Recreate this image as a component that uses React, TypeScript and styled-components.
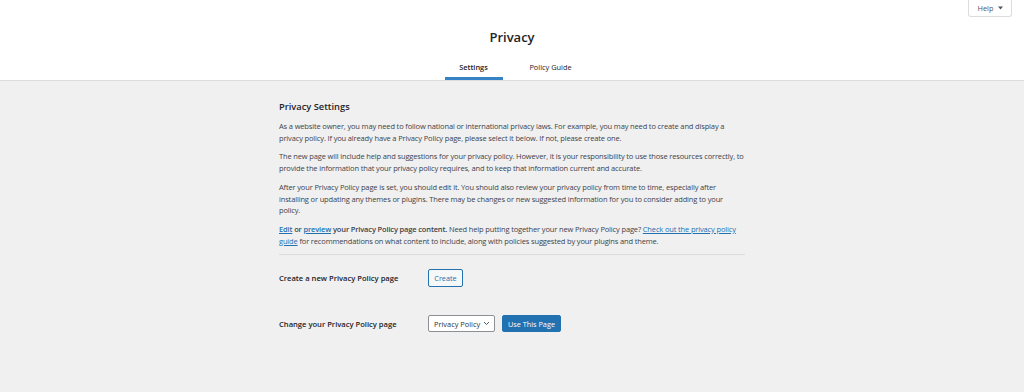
import React from 'react';
import styled, { createGlobalStyle } from 'styled-components';

const GlobalStyle = createGlobalStyle`
  html, body {
    margin: 0;
    padding: 0;
    background: #f0f0f1;
  }

  body {
    font-family: 'Open Sans', 'Liberation Sans', sans-serif;
    color: #3c434a;
  }

  * {
    box-sizing: border-box;
  }
`;

const Page = styled.div`
  min-height: 392px;
  background: #f0f0f1;
`;

const Header = styled.header`
  position: relative;
  height: 81px;
  background: #fff;
  border-bottom: 1px solid #dcdcde;
  display: flex;
  flex-direction: column;
  align-items: center;
`;

const HelpTab = styled.button`
  position: absolute;
  top: -1px;
  right: 12px;
  width: 44px;
  height: 18px;
  display: flex;
  align-items: center;
  justify-content: center;
  gap: 4px;
  padding: 0;
  background: #fff;
  border: 1px solid #dcdcde;
  border-top: none;
  border-radius: 0 0 3px 3px;
  color: #50575e;
  font-family: inherit;
  font-size: 7.4px;
  cursor: pointer;
`;

const Title = styled.h1`
  margin: 28px 0 0;
  font-size: 13px;
  line-height: 18px;
  font-weight: 600;
  color: #1d2327;
`;

const Tabs = styled.nav`
  display: inline-grid;
  grid-template-columns: 58px 58px;
  column-gap: 19px;
  margin-top: 10px;
`;

const Tab = styled.a<{ $active?: boolean }>`
  display: block;
  padding: 5px 0 4px;
  text-align: center;
  font-size: 7.4px;
  line-height: 12px;
  color: #1d2327;
  font-weight: ${({ $active }) => ($active ? 600 : 400)};
  text-decoration: none;
  border-bottom: 3px solid ${({ $active }) => ($active ? '#3582c4' : 'transparent')};
`;

const Body = styled.main`
  width: 466px;
  margin: 0 auto;
  padding-top: 19px;
`;

const Heading = styled.h2`
  margin: 0 0 8px;
  font-size: 9.3px;
  line-height: 13px;
  font-weight: 600;
  color: #1d2327;
`;

const Para = styled.p`
  margin: 0 0 7px;
  font-size: 7.5px;
  line-height: 11.7px;
  letter-spacing: -0.15px;
`;

const Strong = styled.strong`
  font-weight: 600;
  color: #3c434a;
`;

const Link = styled.a<{ $bold?: boolean }>`
  color: #2271b1;
  text-decoration: underline;
  font-weight: ${({ $bold }) => ($bold ? 600 : 400)};
`;

const Divider = styled.hr`
  margin: 7px 0 0;
  border: none;
  border-top: 1px solid #dcdcde;
`;

const Form = styled.div`
  display: grid;
  grid-template-columns: 149px 1fr;
  grid-auto-rows: 45px;
  row-gap: 1px;
  align-items: center;
`;

const Label = styled.div`
  font-size: 7.6px;
  font-weight: 600;
  color: #1d2327;
`;

const Controls = styled.div`
  display: flex;
  align-items: center;
  gap: 7px;
`;

const Button = styled.button<{ $primary?: boolean; $w: number }>`
  width: ${({ $w }) => $w}px;
  height: ${({ $primary }) => ($primary ? 17 : 18)}px;
  padding: 0;
  font-family: inherit;
  font-size: 7.3px;
  border-radius: 2px;
  border: 1px solid #2271b1;
  background: ${({ $primary }) => ($primary ? '#2271b1' : '#f6f7f7')};
  color: ${({ $primary }) => ($primary ? '#fff' : '#2271b1')};
  cursor: pointer;
`;

const Select = styled.div`
  width: 67px;
  height: 17px;
  display: flex;
  align-items: center;
  justify-content: space-between;
  padding: 0 4px 0 5px;
  background: #fff;
  border: 1px solid #8c8f94;
  border-radius: 2px;
  font-size: 7.4px;
  color: #2c3338;
`;

const Chevron = () => (
  <svg width="7" height="5" viewBox="0 0 7 5" fill="none">
    <path d="M1 1L3.5 3.5L6 1" stroke="#50575e" strokeWidth="1" />
  </svg>
);

const Caret = () => (
  <svg width="5" height="4" viewBox="0 0 5 4">
    <path d="M0 0.5H5L2.5 3.5Z" fill="#50575e" />
  </svg>
);

export default function App() {
  return (
    <Page>
      <GlobalStyle />
      <Header>
        <HelpTab>
          Help <Caret />
        </HelpTab>
        <Title>Privacy</Title>
        <Tabs>
          <Tab $active>Settings</Tab>
          <Tab>Policy Guide</Tab>
        </Tabs>
      </Header>
      <Body>
        <Heading>Privacy Settings</Heading>
        <Para>
          As a website owner, you may need to follow national or international privacy laws. For
          example, you may need to create and display a privacy policy. If you already have a
          Privacy Policy page, please select it below. If not, please create one.
        </Para>
        <Para>
          The new page will include help and suggestions for your privacy policy. However, it is
          your responsibility to use those resources correctly, to provide the information that
          your privacy policy requires, and to keep that information current and accurate.
        </Para>
        <Para>
          After your Privacy Policy page is set, you should edit it. You should also review your
          privacy policy from time to time, especially after installing or updating any themes or
          plugins. There may be changes or new suggested information for you to consider adding to
          your policy.
        </Para>
        <Para>
          <Link $bold>Edit</Link> <Strong>or</Strong> <Link $bold>preview</Link>{' '}
          <Strong>your Privacy Policy page content.</Strong> Need help putting together your new
          Privacy Policy page? <Link>Check out the privacy policy guide</Link> for recommendations
          on what content to include, along with policies suggested by your plugins and theme.
        </Para>
        <Divider />
        <Form>
          <Label>Create a new Privacy Policy page</Label>
          <Controls>
            <Button $w={35}>Create</Button>
          </Controls>
          <Label>Change your Privacy Policy page</Label>
          <Controls>
            <Select>
              Privacy Policy <Chevron />
            </Select>
            <Button $primary $w={59}>
              Use This Page
            </Button>
          </Controls>
        </Form>
      </Body>
    </Page>
  );
}
